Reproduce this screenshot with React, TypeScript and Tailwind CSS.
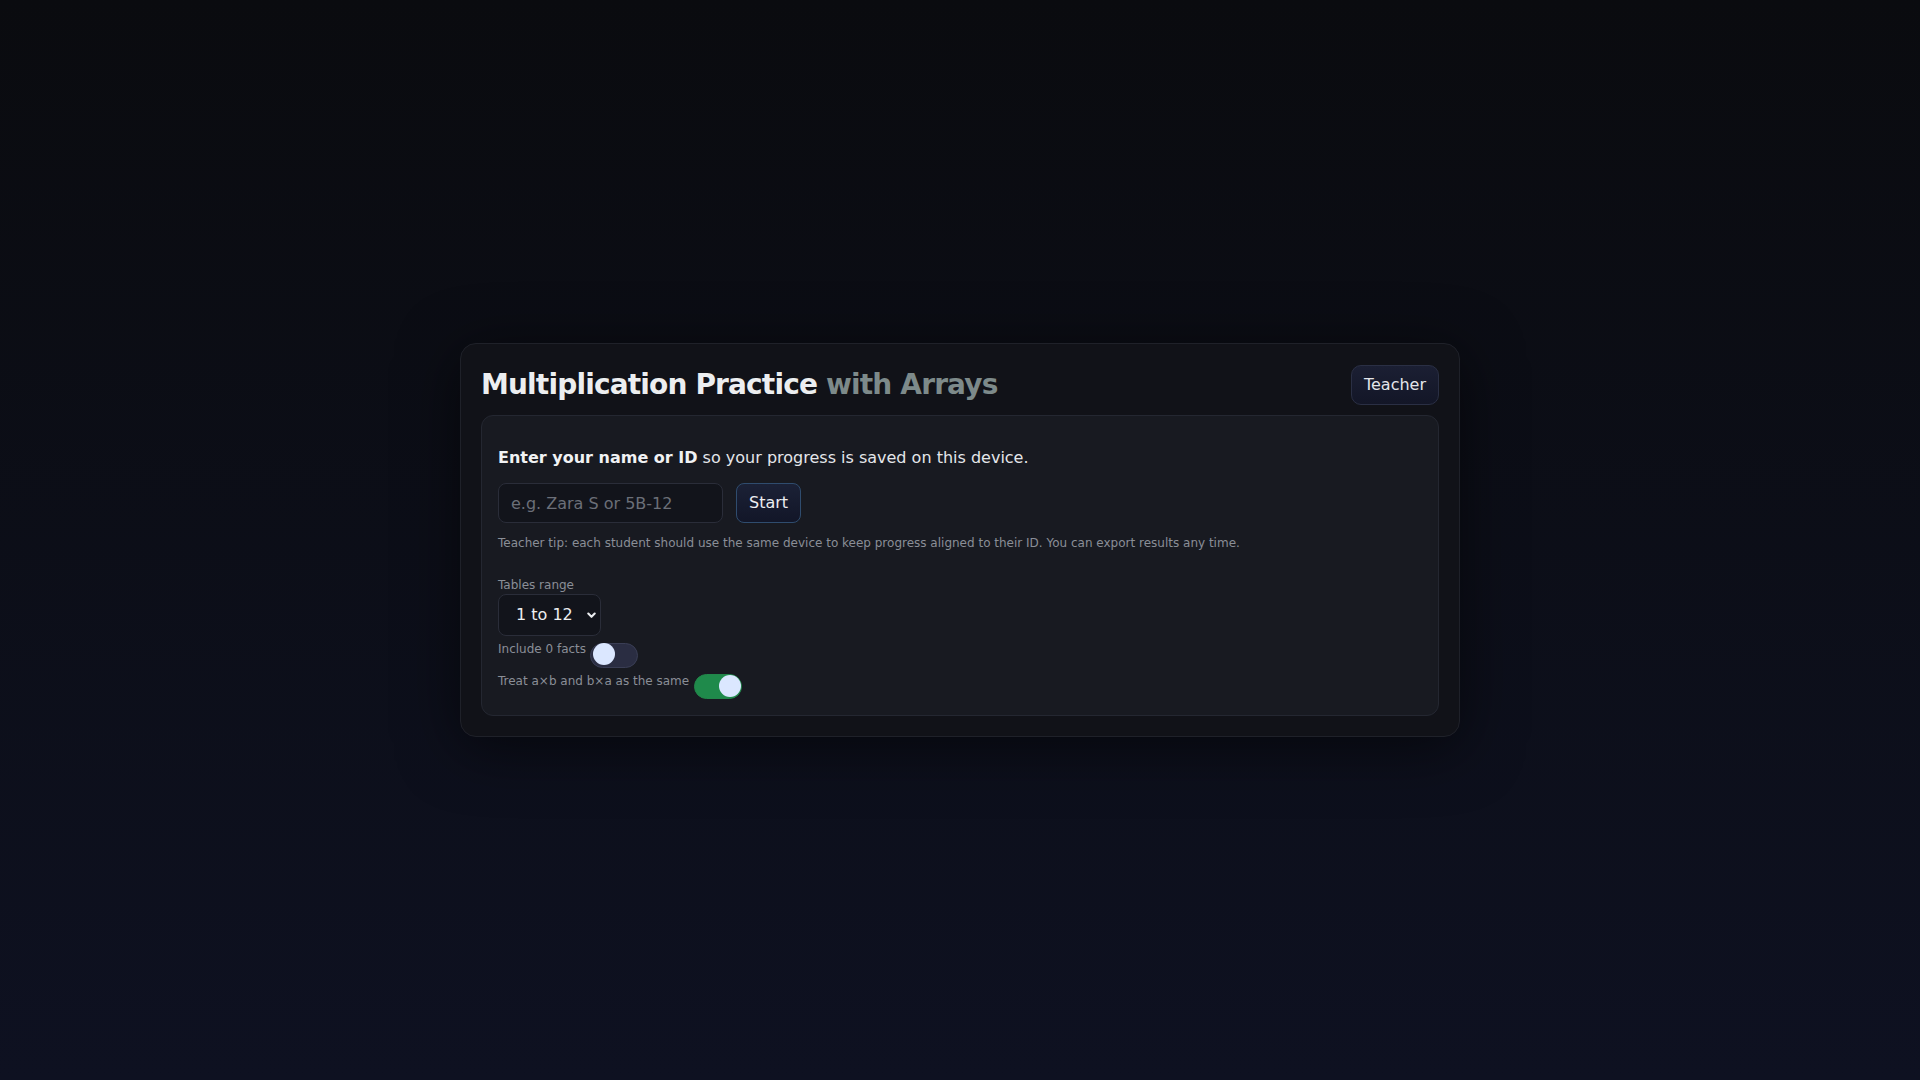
import React, { useState } from "react";

function Toggle({ on, onChange }: { on: boolean; onChange: () => void }) {
  return (
    <button
      type="button"
      onClick={onChange}
      className={
        on
          ? "relative mt-[1px] ml-[5px] h-[25px] w-[48px] shrink-0 rounded-full border border-[#22864a] bg-[#1f8a4b]"
          : "relative mt-[2px] ml-[4px] h-[25px] w-[48px] shrink-0 rounded-full border border-[#3a3e55] bg-[#2a2d42]"
      }
    >
      <span
        className={
          on
            ? "absolute right-[0px] top-[0px] h-[22px] w-[22px] rounded-full bg-[#dbe7ff]"
            : "absolute left-[2px] top-[-1px] h-[22px] w-[22px] rounded-full bg-[#dbe7ff]"
        }
      />
    </button>
  );
}

export default function App() {
  const [zero, setZero] = useState(false);
  const [same, setSame] = useState(true);
  return (
    <div
      className="flex min-h-screen items-center justify-center bg-gradient-to-b from-[#0a0b0f] to-[#0e1121] text-[#e6e7ea]"
      style={{ fontFamily: '"DejaVu Sans", Verdana, sans-serif' }}
    >
      <div className="w-[1000px] rounded-2xl border border-[#1f2129] bg-[#111218] p-5 pt-[21px] shadow-[0_10px_60px_rgba(0,0,0,0.55)]">
        <div className="mb-[10px] flex items-center justify-between">
          <h1 className="text-[28px] font-bold leading-[40px] tracking-[-0.03em] text-[#eceef0]">
            Multiplication Practice <span className="text-[#7d8a8a]">with Arrays</span>
          </h1>
          <button className="h-10 rounded-[10px] border border-[#2a2f44] bg-gradient-to-b from-[#1b1f33] to-[#131627] px-3 text-base text-[#e3e5ea]">
            Teacher
          </button>
        </div>
        <div className="rounded-xl border border-[#242731] bg-[#181a21] p-4">
          <p className="mt-[14px] text-base leading-6 text-[#e4e6ea]">
            <span className="font-bold text-[#f1f2f4]">Enter your name or ID</span> so your progress is saved on this device.
          </p>
          <div className="mt-[13px] flex items-center gap-[13px]">
            <input
              placeholder="e.g. Zara S or 5B-12"
              className="h-10 w-[225px] rounded-lg border border-[#2a2d39] bg-[#12141b] px-3 text-base text-[#e6e7ea] outline-none placeholder:text-[#6b6f78]"
            />
            <button className="h-10 rounded-lg border border-[#2f4c6e] bg-gradient-to-b from-[#1b2136] to-[#121628] px-3 text-base text-[#eceef2]">
              Start
            </button>
          </div>
          <p className="mt-3 text-xs leading-4 text-[#8a8e97]">
            Teacher tip: each student should use the same device to keep progress aligned to their ID. You can export results any time.
          </p>
          <div className="mt-[26px] text-xs leading-[17px] text-[#8a8e97]">Tables range</div>
          <div className="relative flex h-[42px] w-[103px] items-center rounded-lg border border-[#2a2d39] bg-[#12141b] pl-[17px] text-base text-[#eceef0]">
            <span>1 to 12</span>
            <svg className="absolute right-[4px] top-[17px]" width="9" height="7" viewBox="0 0 9 7" fill="none">
              <path d="M1.3 1.6 L4.5 4.8 L7.7 1.6" stroke="#eceef0" strokeWidth="2.1" strokeLinecap="round" strokeLinejoin="round" />
            </svg>
          </div>
          <div className="mt-[5px] flex items-start">
            <span className="text-xs leading-4 text-[#8a8e97]">Include 0 facts</span>
            <Toggle on={zero} onChange={() => setZero(!zero)} />
          </div>
          <div className="mt-[5px] flex items-start">
            <span className="text-xs leading-4 text-[#8a8e97]">Treat a×b and b×a as the same</span>
            <Toggle on={same} onChange={() => setSame(!same)} />
          </div>
        </div>
      </div>
    </div>
  );
}
